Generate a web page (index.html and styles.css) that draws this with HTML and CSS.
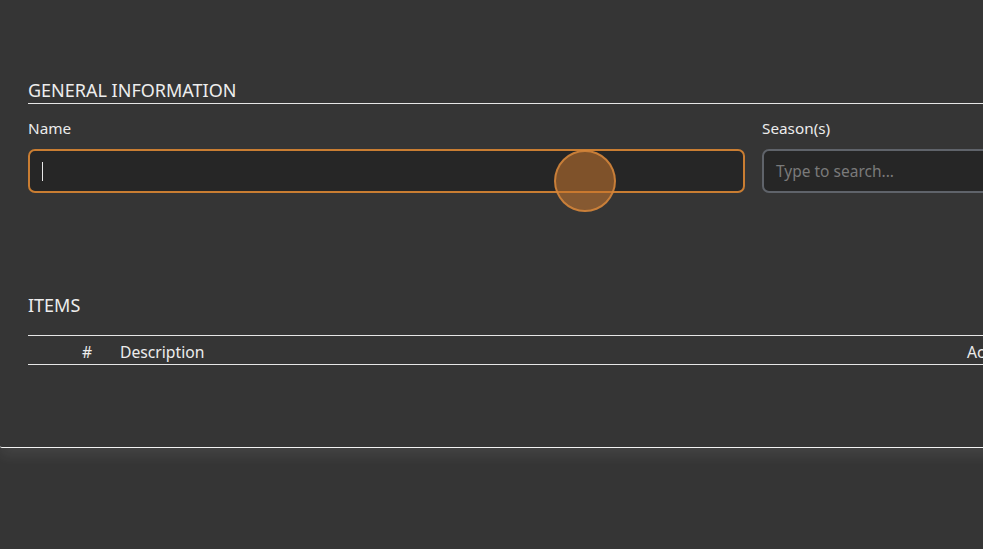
FILE: index.html
```html
<!DOCTYPE html>
<html>
<head>
<meta charset="utf-8">
<link rel="stylesheet" href="styles.css">
</head>
<body>
<div class="panel">
  <section class="general">
    <h2 class="section-title underlined">GENERAL INFORMATION</h2>
    <div class="form-row">
      <div class="field field-name">
        <label class="field-label">Name</label>
        <div class="input input-focus"><span class="caret"></span></div>
      </div>
      <div class="field field-season">
        <label class="field-label">Season(s)</label>
        <div class="input input-idle"><span class="placeholder">Type to search...</span></div>
      </div>
    </div>
  </section>
  <section class="items">
    <h2 class="section-title">ITEMS</h2>
    <div class="table-head">
      <span class="col-select"></span>
      <span class="col-num">#</span>
      <span class="col-desc">Description</span>
      <span class="col-actions">Actions</span>
    </div>
  </section>
  <div class="click-indicator"></div>
</div>
</body>
</html>
```
FILE: styles.css
```css
html, body {
  margin: 0;
  padding: 0;
  background: #353535;
  overflow: hidden;
  width: 983px;
  height: 549px;
}
body {
  font-family: "Noto Sans", "Open Sans", sans-serif;
  color: #ececec;
}
.panel {
  position: relative;
  width: 1400px;
  height: 448px;
  box-sizing: border-box;
  padding: 78px 0 0 28px;
  border-bottom: 1px solid #f2f2f2;
  border-bottom-left-radius: 2px;
  background: #353535;
  box-shadow: 0 8px 14px rgba(255, 255, 255, 0.07);
}
.section-title {
  margin: 0;
  font-size: 18px;
  font-weight: 400;
  line-height: 24px;
  color: #ededed;
}
.underlined {
  padding-bottom: 1px;
  border-bottom: 1px solid #e6e6e6;
}
.form-row {
  display: flex;
  gap: 17px;
  margin-top: 15px;
}
.field {
  display: flex;
  flex-direction: column;
  flex-shrink: 0;
}
.field-name { width: 717px; }
.field-season { width: 700px; }
.field-label {
  font-size: 15.3px;
  line-height: 18px;
  margin-bottom: 12px;
  color: #ececec;
}
.input {
  box-sizing: border-box;
  height: 44px;
  border-radius: 7px;
  background: #262626;
  display: flex;
  align-items: center;
  padding: 0 12px;
}
.input-focus {
  border: 2px solid #c97d32;
}
.input-idle {
  border: 2px solid #5f636a;
}
.caret {
  display: block;
  width: 1px;
  height: 19px;
  background: #e8e8e8;
}
.placeholder {
  font-size: 15.5px;
  color: #7a7a7a;
}
.items {
  margin-top: 100px;
}
.table-head {
  display: grid;
  grid-template-columns: 54px 38px 847px auto;
  margin-top: 18px;
  height: 25px;
  box-sizing: content-box;
  padding-top: 3px;
  align-items: center;
  border-top: 1px solid #e6e6e6;
  border-bottom: 1px solid #e6e6e6;
  font-size: 15.7px;
  line-height: 20px;
  color: #ececec;
  white-space: nowrap;
}
.click-indicator {
  position: absolute;
  left: 554px;
  top: 150px;
  width: 62px;
  height: 62px;
  box-sizing: border-box;
  border-radius: 50%;
  border: 2px solid rgba(214, 135, 60, 0.85);
  background: rgba(200, 118, 45, 0.55);
}
```
